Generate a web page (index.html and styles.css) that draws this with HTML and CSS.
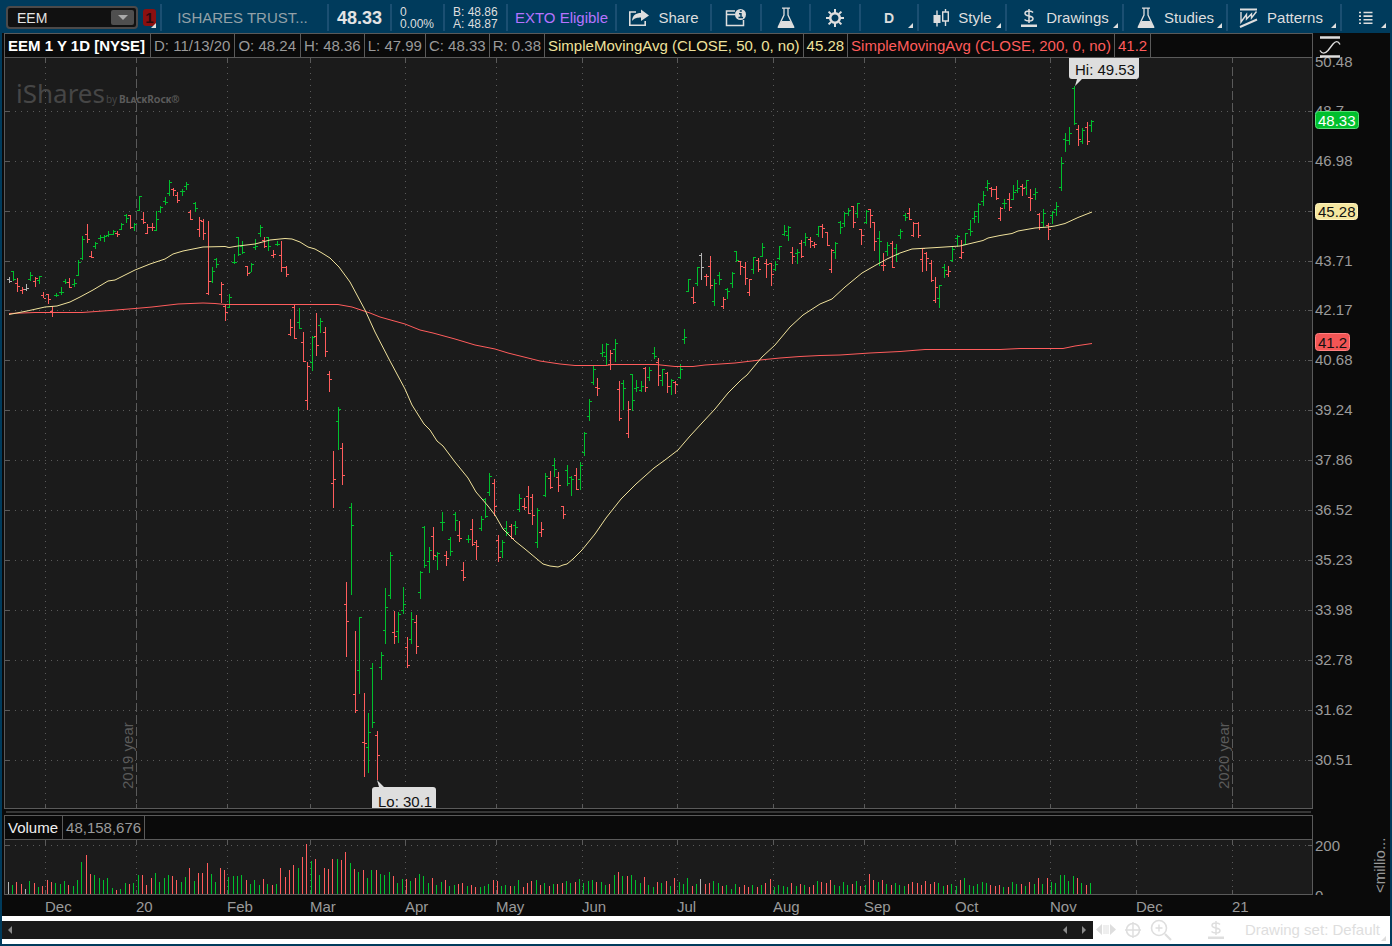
FILE: index.html
```html
<!DOCTYPE html>
<html lang="en">
<head>
<meta charset="utf-8">
<title>EEM 1 Y 1D</title>
<link rel="stylesheet" href="styles.css">
</head>
<body>
<header class="toolbar">
  <div class="tool symbol">
    <div class="combo">
      <input class="combo-input" type="text" value="EEM" size="4" aria-label="Symbol">
      <button class="combo-arrow" type="button" aria-label="Symbol list"><svg width="10" height="5" viewBox="0 0 10 5"><path d="M0 0h10L5 5z"/></svg></button>
    </div>
    <button class="link-badge" type="button">1</button>
    <i class="corner"></i>
  </div>
  <div class="tool company">ISHARES TRUST...</div>
  <div class="tool last">48.33</div>
  <div class="tool pair"><span>0</span><span>0.00%</span></div>
  <div class="tool pair"><span>B: 48.86</span><span>A: 48.87</span></div>
  <div class="tool eligible">EXTO Eligible</div>
  <button class="tool" type="button">
    <svg class="icon" width="22" height="20" viewBox="0 0 22 20"><path d="M8 4H1.800v13.200h15.400V13" fill="none" stroke="#dedede" stroke-width="1.600"/><path d="M4 13C4.500 7 8 5 13 5V1.500L21 7.500L13 13V9.500C9 9.500 6.500 10 4 13z" fill="#dedede"/></svg>
    <span>Share</span>
  </button>
  <button class="tool" type="button" aria-label="Info panel">
    <svg class="icon" width="22" height="20" viewBox="0 0 22 20"><path d="M10 3H1.500v14.500h17V12M1.500 6.500H10" fill="none" stroke="#dedede" stroke-width="1.500"/><circle cx="15.500" cy="6.500" r="5.500" fill="#dedede"/><path d="M14 5.800h2V9.500M13.500 9.500h4.500M14.800 3h2" fill="none" stroke="#003b5c" stroke-width="1.400"/></svg>
  </button>
  <button class="tool" type="button" aria-label="Edit studies">
    <svg class="icon flask" width="20" height="22" viewBox="0 0 20 22"><path d="M6 1.200h8M8 1.500V8L2.500 19.500h15L12 8V1.500" fill="none" stroke="#dedede" stroke-width="1.300"/><path d="M5.500 14h9L18.500 21H1.500z" fill="#dedede"/></svg>
  </button>
  <button class="tool" type="button" aria-label="Settings">
    <svg class="icon" width="20" height="20" viewBox="-10 -10 20 20"><circle r="4.800" fill="none" stroke="#dedede" stroke-width="2.600"/><path d="M0-9V-5M0 9V5M-9 0H-5M9 0H5M-6.400-6.400L-4-4M6.400-6.400L4-4M-6.400 6.400L-4 4M6.400 6.400L4 4" stroke="#dedede" stroke-width="2"/></svg>
  </button>
  <button class="tool period" type="button"><span>D</span><i class="corner"></i></button>
  <button class="tool" type="button">
    <svg class="icon candles" width="18" height="20" viewBox="0 0 18 20"><path d="M5 2.500v16" stroke="#dedede" stroke-width="1.400"/><path d="M1.500 7h7v8h-7z" fill="#dedede"/><path d="M13.500 1v3M13.500 13v5M10.700 4h5.600v9h-5.600z" fill="none" stroke="#dedede" stroke-width="1.400"/></svg>
    <span>Style</span><i class="corner"></i>
  </button>
  <button class="tool" type="button">
    <svg class="icon" width="18" height="20" viewBox="0 0 18 20"><path d="M9 1v14M13 4.500C12 3.200 11 3 9 3C6.500 3 5 4 5 5.500C5 9 13 7 13 10.500C13 12 11.500 13 9 13C7 13 5.500 12.500 4.500 11.500" fill="none" stroke="#dedede" stroke-width="1.500"/><path d="M1 16.500h16v2.500H1z" fill="#dedede"/></svg>
    <span>Drawings</span><i class="corner"></i>
  </button>
  <button class="tool" type="button">
    <svg class="icon flask" width="20" height="22" viewBox="0 0 20 22"><path d="M6 1.200h8M8 1.500V8L2.500 19.500h15L12 8V1.500" fill="none" stroke="#dedede" stroke-width="1.300"/><path d="M5.500 14h9L18.500 21H1.500z" fill="#dedede"/></svg>
    <span>Studies</span><i class="corner"></i>
  </button>
  <button class="tool patterns" type="button">
    <svg class="icon" width="20" height="22" viewBox="0 0 20 22"><path d="M1 2.500h17M1 20L18 12.500" fill="none" stroke="#dedede" stroke-width="2"/><path d="M2 5v10L7.500 7.500V12L12.500 7V11L17.500 4.500" fill="none" stroke="#dedede" stroke-width="1.400"/></svg>
    <span>Patterns</span><i class="corner"></i>
  </button>
  <button class="tool menu" type="button" aria-label="Menu">
    <svg class="icon" width="14" height="14" viewBox="0 0 14 14"><path d="M0 1.500h2M0 5.100h2M0 8.700h2M0 12.300h2M4.500 1.500H13.500M4.500 5.100h9M4.500 8.700h9M4.500 12.300h9" stroke="#dedede" stroke-width="1.600"/></svg>
    <i class="corner"></i>
  </button>
</header>

<main class="workspace">
  <div class="strip">
    <div class="readout">
      <b class="cell title">EEM 1 Y 1D [NYSE]</b>
      <span class="cell session">D: 11/13/20</span>
      <span class="cell session">O: 48.24</span>
      <span class="cell">H: 48.36</span>
      <span class="cell">L: 47.99</span>
      <span class="cell">C: 48.33</span>
      <span class="cell">R: 0.38</span>
      <span class="cell fast">SimpleMovingAvg (CLOSE, 50, 0, no)</span>
      <span class="cell fast">45.28</span>
      <span class="cell slow">SimpleMovingAvg (CLOSE, 200, 0, no)</span>
      <span class="cell slow">41.2</span>
    </div>
    <button class="scale" type="button" aria-label="Scale"><svg width="22" height="22" viewBox="0 0 22 22"><path d="M1 1.500h20M1 20.500h20" stroke="#dedede" stroke-width="2.400"/><path d="M1 14.500C3 18 6 18 9 14.500L14 8C16.500 5 19 4.500 21 8.500" fill="none" stroke="#dedede" stroke-width="1.400"/></svg></button>
  </div>

  <svg class="chart" id="price" viewBox="2 58 1388 751" role="img" aria-label="EEM daily price">
    <path class="plot" d="M5 58H1312V808H5z"/>
    <g class="logo">
      <text class="brand" x="16" y="103">iShares</text>
      <text class="by" x="106" y="103">by</text>
      <text class="owner" x="119" y="103">BlackRock®</text>
    </g>
    <g id="price-grid"></g>
    <path class="frame" d="M4.500 58V808.500H1312.500V58"/>
    <text class="year" transform="translate(133 789) rotate(-90)">2019 year</text>
    <text class="year" transform="translate(1229 789) rotate(-90)">2020 year</text>
    <g id="bars"></g>
    <path class="sma slow-line" d="M9 313.500L35 312.500H82L110 310.500L135 308.500L152 307L165 305.500L178 304L203 303L215 303.500L225 304.500H338L352 307L370 313L380 317L405 324L420 330L433 333L455 339L475 345L495 349L508 353L540 361L560 364L575 365.500H606L612 364.500H656L675 366.500H693L705 365L735 363L760 360L780 358L800 356.500L820 355.500L840 355L870 353L900 351.500L925 349.500H1000L1020 348.500H1063L1075 346L1092 343.500"/>
    <path class="sma fast-line" d="M9 314.500L27 311L45 307L57 306L70 302L80 297L93 290L108 281L115 280L135 270L150 264L165 259L173 254L183 251L203 247L225 246.500L229 247.500L238 246L255 244L270 240L285 238.500L292 239L300 242L308 247L315 249L322 253L330 258L339 267L350 282L365 310L375 332L390 361L405 389L412 405L424 424L430 430L437 441L443 446L455 462L468 478L476 492L488 506L495 515L503 529L515 541L525 549L543 564L550 566L558 567L563 565L567 564L573 559L582 550L595 534L606 518L621 499L636 484L645 476L654 468L665 460L678 450L690 436L702 423L715 409L728 393L741 380L747 375L762 357L775 345L790 327L803 315L820 304L832 299L845 287L862 273L876 265L887 259L900 253L912 249L937 247.500L960 246L983 240.500L988 238L1000 235.500L1012 233.500L1018 231L1035 228L1048 227L1055 226L1065 223.500L1078 217.500L1092 212"/>
    <g class="callout">
      <path d="M1069 58h70v18q0 3-3 3h-54l-7 7l2-7h-5q-3 0-3-3z"/>
      <text x="1075" y="75">Hi: 49.53</text>
    </g>
    <g class="callout">
      <path d="M372 808V790q0-3 3-3h4l-2-7l7 7h49q3 0 3 3v18z"/>
      <text x="378" y="807">Lo: 30.1</text>
    </g>
    <g id="price-axis" class="axis"></g>
    <g class="tag last-tag"><rect x="1315.500" y="111.500" width="43" height="17" rx="3"/><text x="1318" y="126">48.33</text></g>
    <g class="tag fast-tag"><rect x="1315.500" y="203.500" width="42" height="16" rx="3"/><text x="1318" y="217">45.28</text></g>
    <g class="tag slow-tag"><rect x="1315.500" y="333.500" width="34" height="17" rx="3"/><text x="1318" y="348">41.2</text></g>
  </svg>

  <div class="splitter"></div>

  <div class="strip">
    <div class="readout">
      <span class="cell volume">Volume</span>
      <span class="cell">48,158,676</span>
    </div>
  </div>

  <svg class="chart below" id="volume" viewBox="2 840 1388 76" role="img" aria-label="Volume">
    <path class="plot" d="M5 840H1312V894H5z"/>
    <g id="volume-grid"></g>
    <g id="volume-bars"></g>
    <path class="frame" d="M4.500 840V894.500H1312.500V840"/>
    <g id="months" class="axis"></g>
    <g class="axis">
      <text x="1315" y="851">200</text>
      <svg x="1315" y="888" width="12" height="7"><text x="0" y="13">0</text></svg>
      <text transform="translate(1385 893) rotate(-90)">&lt;millio...</text>
    </g>
  </svg>
</main>

<footer class="bottom">
  <div class="scrollbar">
    <button type="button" aria-label="Scroll to start"><svg width="4" height="8" viewBox="0 0 4 8"><path d="M4 0v8L0 4z"/></svg></button>
    <div class="steps">
      <button type="button" aria-label="Scroll left"><svg width="4" height="8" viewBox="0 0 4 8"><path d="M4 0v8L0 4z"/></svg></button>
      <button type="button" aria-label="Scroll right"><svg width="4" height="8" viewBox="0 0 4 8"><path d="M0 0v8L4 4z"/></svg></button>
    </div>
  </div>
  <div class="chart-tools">
    <button type="button" aria-label="Pan"><svg width="20" height="14" viewBox="0 0 20 14"><path d="M6 1v11L0 6.500zM14 1v11L20 6.500z" fill="#dedede"/><path d="M8 2v9M10 2v9M12 2v9" stroke="#dedede" stroke-width="1"/></svg></button>
    <button type="button" aria-label="Crosshair"><svg width="18" height="18" viewBox="0 0 18 18"><circle cx="9" cy="9" r="6.500" fill="none" stroke="#dedede" stroke-width="1.600"/><path d="M9 1v16M1 9h16" stroke="#dedede" stroke-width="1.400"/></svg></button>
    <button class="zoom" type="button" aria-label="Zoom in"><svg width="22" height="22" viewBox="0 0 22 22"><circle cx="9" cy="9" r="7.500" fill="none" stroke="#dedede" stroke-width="1.600"/><path d="M9 5.500v7M5.500 9h7" stroke="#dedede" stroke-width="1.400"/><path d="M15 15l6 6" stroke="#dedede" stroke-width="2.200"/></svg></button>
    <button class="set" type="button">
      <svg width="18" height="20" viewBox="0 0 18 20"><path d="M9 1v14M13 4.500C12 3.200 11 3 9 3C6.500 3 5 4 5 5.500C5 9 13 7 13 10.500C13 12 11.500 13 9 13C7 13 5.500 12.500 4.500 11.500" fill="none" stroke="#dedede" stroke-width="1.500"/><path d="M1 16.500h16v2.500H1z" fill="#dedede"/></svg>
      <span>Drawing set: Default</span><i class="corner"></i>
    </button>
  </div>
</footer>
<script src="chart.js"></script>
</body>
</html>
```
FILE: styles.css
```css
* { box-sizing: border-box; }

body {
  margin: 0;
  min-height: 100vh;
  padding: 0 2px 2px;
  background: #003b5c;
  color: #9a9a9a;
  font: 15px/18px "Liberation Sans", Arial, sans-serif;
}

button {
  margin: 0;
  padding: 0;
  border: 0;
  background: none;
  color: inherit;
  font: inherit;
}

svg { display: block; flex: none; }

.toolbar {
  display: grid;
  grid-template-columns: 160fr 167fr 63fr 53fr 63fr 109fr 95fr 50fr 49fr 50fr 58fr 88fr 117fr 104fr 114fr 48fr;
  height: 33px;
  padding: 4px 0 2px;
  color: #dedede;
}

.tool {
  position: relative;
  display: flex;
  align-items: center;
  justify-content: center;
  gap: 8px;
  min-width: 0;
  white-space: nowrap;
  border-right: 2px solid #1b4f72;
}

.tool:last-child { border-right: 0; }

.corner {
  position: absolute;
  right: 4px;
  bottom: 3px;
  width: 5px;
  height: 5px;
  background: #dedede;
  clip-path: polygon(100% 0, 100% 100%, 0 100%);
}

.symbol { justify-content: flex-start; gap: 5px; padding-left: 4px; }

.combo {
  display: flex;
  flex: 1 1 0;
  align-items: center;
  min-width: 0;
  height: 23px;
  padding: 0 2px 0 9px;
  border: 2px solid #4c4a4a;
  border-radius: 4px;
  background: #111;
}

.combo-input {
  flex: 1 1 0;
  width: 0;
  min-width: 0;
  padding: 0;
  border: 0;
  outline: 0;
  background: none;
  color: #e4e4e4;
  font: 14px/18px "Liberation Sans", Arial, sans-serif;
}

.combo-arrow {
  display: flex;
  flex: none;
  align-items: center;
  justify-content: center;
  width: 23px;
  height: 15px;
  border-radius: 2px;
  background: #4f4f4f;
  fill: #aaa;
}

.link-badge {
  flex: none;
  width: 13px;
  height: 17px;
  margin-right: 4px;
  border-radius: 3px;
  background: #8c1010;
  color: #2b0a12;
  font-weight: bold;
}

.company { color: #93a1a8; padding-right: 4px; }
.last { color: #e4e4e4; font-size: 18px; font-weight: bold; }
.eligible { color: #b673ff; }
.patterns { padding-right: 6px; }

.pair {
  flex-direction: column;
  align-items: flex-start;
  gap: 0;
  padding-left: 8px;
  font-size: 12px;
  line-height: 12px;
}

.period { font-size: 14px; font-weight: bold; }

.workspace { background: #0a0a0a; }

.strip {
  display: grid;
  grid-template-columns: 1309fr 77fr;
  padding-left: 2px;
}

.readout {
  display: flex;
  height: 25px;
  border: 1px solid #5a5a5a;
  white-space: nowrap;
}

.cell {
  padding: 3px 3px 0;
  border-right: 1px solid #5a5a5a;
}

.title { padding-right: 5px; color: #fff; }
.session { padding-right: 4px; }
.fast { color: #f0e29c; }
.slow { color: #ff5c5c; }
.volume { padding-right: 4px; color: #f0f0f0; }

.scale { padding: 2px 0 0 6px; justify-self: start; z-index: 1; }

.chart {
  width: 100%;
  height: auto;
  overflow: visible;
  font-size: 15px;
}

.plot { fill: #1b1b1b; }
.frame, .tick { fill: none; stroke: #5a5a5a; shape-rendering: crispEdges; }
.dots { fill: none; stroke: #5a5a5a; stroke-dasharray: 1 5; shape-rendering: crispEdges; }
.dashes { fill: none; stroke: #5a5a5a; stroke-dasharray: 9 3; shape-rendering: crispEdges; }
.year { fill: #5a5a5a; }
.axis { fill: #9a9a9a; }
.bar { fill: none; shape-rendering: crispEdges; }
.up { stroke: #00bf2d; }
.down { stroke: #ff5c5c; }
.flat { stroke: #b4b4b4; }
.sma { fill: none; stroke-width: 1; }
.slow-line { stroke: #ff5c5c; }
.fast-line { stroke: #f0e29c; }

.logo { fill: #464646; }
.brand { font: 26px "Noto Sans", sans-serif; }
.by { font: 10px "Noto Sans", sans-serif; }
.owner { fill: #5a5a5a; font: bold 10px "Noto Sans", sans-serif; font-variant: small-caps; }

.callout path { fill: #dedede; }
.callout text { fill: #111; }

.last-tag rect { fill: #00bf2d; stroke: #58e078; }
.last-tag text { fill: #fff; }
.fast-tag rect { fill: #f5e7a0; stroke: #fff3bd; }
.slow-tag rect { fill: #f25555; stroke: #ff8080; }
.fast-tag text, .slow-tag text { fill: #111; }

.splitter {
  height: 6px;
  margin: 0 79px 0 4px;
  border: solid #0a0a0a;
  border-width: 2px 0;
  background: #363636;
}

.bottom {
  display: grid;
  grid-template-columns: 1091fr 297fr;
  height: 28px;
  background: #fff;
  color: #dedede;
}

.scrollbar {
  display: flex;
  align-items: center;
  justify-content: space-between;
  height: 18px;
  margin-top: 5px;
  padding: 0 7px 0 6px;
  background: #191919;
  fill: #8a8a8a;
}

.steps { display: flex; gap: 15px; }

.chart-tools { display: flex; align-items: center; gap: 8px; padding-left: 3px; }

.set {
  position: relative;
  display: flex;
  flex: 1;
  align-items: center;
  justify-content: flex-end;
  gap: 20px;
  height: 28px;
  padding-right: 10px;
  white-space: nowrap;
}
```
FILE: chart.js
```js
// Daily bars: x, high, low, open, close; colour is u (up), d (down) or f (flat).
const BARS = `
f9,277,283,279,281 u13,271,281,271,279 d17,278,292,283,286 d22,287,294,290,289 f26,284,291,289,288
u30,272,281,279,275 d35,277,287,281,278 u39,276,284,280,276 d43,292,298,295,298 d48,294,304,294,299
d52,306,317,311,312 u56,293,297,295,295 u61,287,295,292,292 u65,279,284,281,282 d69,278,288,282,287
u74,279,287,284,283 u78,260,276,275,262 u82,236,260,258,239 d87,224,243,234,239 d91,251,258,256,257
u95,242,249,246,243 u100,235,241,238,237 u104,235,242,237,236 u108,231,237,235,234 u113,230,235,234,231
d117,231,237,233,234 u121,223,230,229,224 u126,214,223,215,218 d130,215,229,215,227 u134,223,231,227,224
u139,196,211,210,196 d143,212,224,219,222 d147,224,234,233,227 d152,223,231,227,227 u156,211,231,230,219
u160,206,213,211,207 u165,197,205,201,202 u169,180,196,193,182 d173,188,196,189,190 d177,192,203,195,200
u182,189,196,191,191 u186,182,190,186,184 d190,210,220,212,219 u195,202,212,203,208 d199,217,237,229,220
d203,219,240,221,233 d208,221,295,293,281 u212,267,283,281,271 u216,258,268,259,264 d221,282,303,294,284
d225,305,321,306,312 u229,294,308,307,297 u234,254,264,262,262 u238,237,256,237,254 u242,241,254,246,252
d247,266,276,266,273 u251,263,272,272,264 u255,239,250,247,246 u260,225,237,233,227 d264,237,248,240,246
u268,237,251,237,246 d273,250,258,255,254 u277,241,246,244,244 d281,241,272,255,267 d286,266,277,267,274
d290,319,336,334,327 d294,305,339,307,338 u299,308,329,322,328 d303,332,362,342,361 d307,362,410,400,366
u312,336,371,362,337 d316,313,356,336,345 u320,318,333,325,321 d325,327,357,332,351 d329,371,392,374,379
d333,451,508,483,479 u338,407,450,421,409 d342,443,485,448,475 d346,582,657,604,621 u351,503,595,507,525
d355,631,713,694,710 u359,617,694,670,617 d364,693,777,742,743 u368,713,773,747,732 u372,663,728,668,722
d377,731,780,735,755 u381,652,680,667,655 u385,588,644,630,607 u390,552,599,595,555 d394,611,644,632,636
u398,612,643,631,614 u403,587,614,610,604 d407,637,668,647,665 u411,612,644,639,619 d416,615,654,622,646
u420,571,599,592,572 u424,526,568,527,565 u429,547,573,561,550 d433,527,560,536,555 u437,552,570,556,553
u442,512,531,522,522 d446,551,566,555,558 u450,537,556,539,551 u455,512,531,514,520 d459,521,542,535,538
d463,562,581,570,577 u468,535,543,539,539 d472,519,546,529,544 d476,540,560,542,546 u481,516,531,528,519
u485,498,518,499,516 u489,473,496,492,476 d494,479,516,483,506 d498,535,562,540,557 u502,540,558,551,542
u506,521,536,528,532 d511,524,539,526,538 u515,521,535,525,527 u519,494,512,509,498 d524,498,510,506,507
d528,486,514,496,513 d532,494,525,497,515 u537,508,548,542,510 d541,522,537,532,529 u545,473,497,495,476
d550,471,489,478,487 u554,458,477,465,469 d558,472,492,477,485 d563,506,519,506,514 u567,465,486,470,483
u571,476,496,477,479 d576,468,490,475,489 u580,462,490,479,465 u584,432,456,452,433 u589,399,421,416,401
u593,366,385,382,369 d597,378,396,387,388 u602,344,357,353,352 u606,343,365,356,344 d610,350,370,364,353
u615,339,362,349,343 d619,381,421,389,418 u623,380,410,383,388 d628,401,438,433,409 u632,374,411,374,400
u636,380,392,388,387 u641,381,392,390,386 d645,367,392,368,387 u649,367,381,377,370 u654,347,359,353,356
d658,358,386,362,375 u662,369,386,380,369 d667,372,393,373,386 u671,379,395,386,380 d675,381,394,382,384
u680,364,379,377,369 u684,329,344,339,337 u688,279,292,291,279 d693,287,304,297,302 u697,267,286,283,267
f701,253,280,255,267 d706,274,286,276,276 d710,256,289,266,285 u714,279,306,301,283 u719,272,285,275,279
d723,297,309,306,299 u727,288,299,289,291 u732,272,288,283,273 u736,251,262,251,260 d740,261,275,261,266
d745,262,285,267,278 d749,279,296,292,279 u753,257,274,269,257 d758,258,272,260,269 u762,243,257,256,247
d766,259,278,263,264 d771,263,286,263,274 u775,261,271,269,264 u779,246,260,258,246 u784,225,236,234,231
u788,226,241,235,227 d792,247,264,252,256 u797,249,264,253,252 d801,240,258,243,256 u805,233,246,242,237
d810,237,248,239,241 d814,242,248,245,244 u818,226,237,234,226 d822,224,238,226,228 d827,232,246,232,245
d831,249,273,269,250 u835,242,259,252,243 u840,221,234,222,227 u844,212,227,223,213 u848,208,216,213,210
d853,206,228,206,222 u857,203,218,213,203 d861,229,245,229,235 u866,210,224,222,211 d870,209,228,209,215
d874,222,251,222,241 u879,231,266,238,241 d883,253,271,265,265 u887,242,256,251,245 d892,241,268,243,267
u896,244,262,248,254 u900,229,239,235,231 u905,213,221,215,217 d909,208,220,213,219 d913,222,237,235,223
d918,222,238,223,235 d922,248,272,259,248 d926,252,271,253,258 d931,260,282,263,280 d935,277,303,300,287
u939,285,308,298,285 u944,264,278,267,270 d948,266,277,274,271 u952,246,262,260,249 u957,235,247,238,236
d961,240,259,257,252 u965,233,245,244,233 u970,220,236,229,231 u974,211,223,218,216 u978,203,223,211,204
u983,191,206,201,195 u987,180,191,187,183 d991,187,197,188,189 d996,186,200,189,198 d1000,207,221,218,208
u1004,199,209,203,203 d1009,193,211,199,207 u1013,185,200,199,192 u1017,180,193,190,188 d1022,184,196,186,188
u1026,180,195,187,180 d1030,189,211,197,198 u1035,188,200,194,192 d1039,213,230,214,227 u1043,209,227,222,213
d1048,223,240,225,229 u1052,211,224,215,212 u1056,202,216,209,206 u1061,157,191,187,163 u1065,133,152,139,140
u1069,127,145,140,133 u1074,86,125,88,123 d1078,125,146,129,139 u1082,128,144,141,130 d1087,122,145,127,141
u1091,120,132,125,121`.trim().split(/\s+/);

// Volume bar heights, one for each daily bar.
const VOLUMES = [
  12,9,12,10,5,13,11,7,8,14,12,11,10,13,9,8,14,32,39,20,19,16,14,16,6,4,5,11,10,11,19,19,9,16,21,12,16,19,18,14,
  12,17,26,13,21,21,31,20,12,26,24,17,18,18,19,14,10,14,9,15,10,9,10,26,17,24,29,26,37,50,33,35,19,26,25,35,35,34,
  42,31,25,22,24,16,24,24,20,19,22,18,11,
  15,15,13,16,20,18,11,16,9,12,14,8,9,10,11,8,9,7,7,8,10,14,13,8,9,8,8,14,7,11,13,14,9,11,8,10,10,11,13,11,12,15,
  11,13,14,12,12,9,10,19,22,18,18,19,14,11,17,9,7,12,11,13,8,16,12,10,16,8,10,15,10,11,13,11,8,9,5,10,7,9,7,9,7,9,
  11,15,7,9,8,7,
  11,8,10,9,7,9,13,12,11,14,9,8,12,9,10,13,8,9,20,14,12,14,10,9,11,9,8,10,12,11,9,13,10,12,11,8,9,10,8,14,16,9,
  8,10,12,11,9,8,9,
  7,7,12,10,10,8,12,10,16,10,16,12,11,19,19,13,18,16,11,9,11
];

const KINDS = { u: "up", d: "down", f: "flat" };
const MONTHS = [[45, "Dec"], [136, "20"], [227, "Feb"], [310, "Mar"], [405, "Apr"], [496, "May"], [582, "Jun"],
  [677, "Jul"], [773, "Aug"], [864, "Sep"], [955, "Oct"], [1050, "Nov"], [1136, "Dec"], [1232, "21"]];
const PRICES = [[62, "50.48"], [111, "48.7"], [161, "46.98"], [211, ""], [261, "43.71"], [310, "42.17"],
  [360, "40.68"], [410, "39.24"], [460, "37.86"], [510, "36.52"], [560, "35.23"], [610, "33.98"],
  [660, "32.78"], [710, "31.62"], [760, "30.51"]];

const fill = (id, markup) => { document.getElementById(id).innerHTML = markup; };
const line = (kind, d) => `<path class="${kind}" d="${d}"/>`;

const price = { up: "", down: "", flat: "" };
const volume = { up: "", down: "", flat: "" };
BARS.forEach((row, i) => {
  const kind = KINDS[row[0]];
  const [x, high, low, open, close] = row.slice(1).split(",").map(Number);
  price[kind] += `M${x + 0.5} ${high}V${low}M${x - 2} ${open + 0.5}h2M${x + 1} ${close + 0.5}h2`;
  volume[kind] += `M${x - 0.5} 894v-${VOLUMES[i]}`;
});
const paths = (set) => Object.keys(set).map((k) => line("bar " + k, set[k])).join("");
fill("bars", paths(price));
fill("volume-bars", paths(volume));

let grid = "";
PRICES.slice(1).forEach(([y]) => {
  grid += line("dots", `M15 ${y + 0.5}H1306`) + line("tick", `M5 ${y + 0.5}h5M1308 ${y + 0.5}h4`);
});
let lower = line("dots", "M15 845.5H1306") + line("tick", "M5 845.5h5M1308 845.5h4");
MONTHS.forEach(([x, label]) => {
  const yearStart = /\d/.test(label);
  grid += line(yearStart ? "dashes" : "dots", `M${x + 0.5} 67V803`)
    + line("tick", `M${x + 0.5} 58v5M${x + 0.5} 808v-4`);
  lower += line("dots", `M${x + 0.5} 850V889`) + line("tick", `M${x + 0.5} 840v5M${x + 0.5} 894v-4`);
});
fill("price-grid", grid);
fill("volume-grid", lower);
fill("months", MONTHS.map(([x, t]) => `<text x="${x}" y="912">${t}</text>`).join(""));
fill("price-axis", PRICES.filter((p) => p[1]).map(([y, t]) => `<text x="1315" y="${y + 5}">${t}</text>`).join(""));
```
